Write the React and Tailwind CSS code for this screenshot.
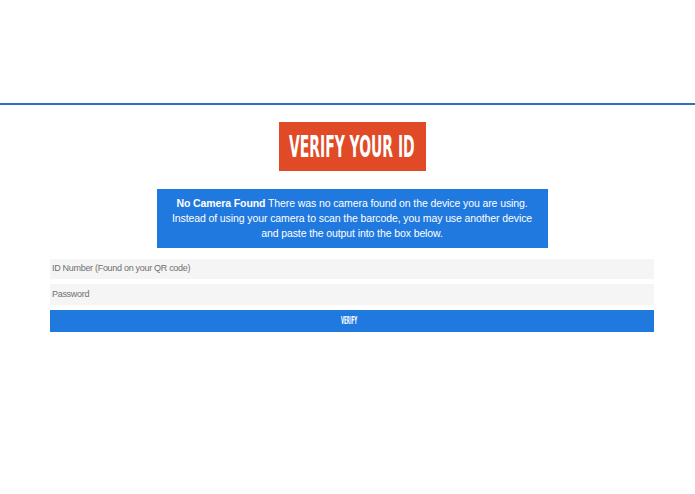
export default function App() {
  return (
    <div className="w-[695px] h-[494px] bg-white" style={{ fontFamily: '"Liberation Sans", Arial, sans-serif' }}>
      <div className="h-[103px]" />
      <div className="h-[2px] bg-[#2d6fc0]" />
      <div className="ml-[50px] w-[604px] flex flex-col items-center">
        <div className="mt-[17px] w-[147px] h-[49px] bg-[#e04a27] flex items-center justify-center overflow-hidden">
          <span
            className="inline-block whitespace-nowrap text-white font-bold text-[31px] leading-none scale-x-[0.5]"
            style={{ fontFamily: '"DejaVu Sans Condensed", "DejaVu Sans", sans-serif' }}
          >
            VERIFY YOUR ID
          </span>
        </div>
        <div className="mt-[18px] w-[391px] h-[59px] bg-[#1f79df] text-white text-center text-[10.5px] leading-[15px] tracking-[-0.1px] flex flex-col items-center justify-center whitespace-nowrap">
          <div><span className="font-bold">No Camera Found</span> There was no camera found on the device you are using.</div>
          <div>Instead of using your camera to scan the barcode, you may use another device</div>
          <div>and paste the output into the box below.</div>
        </div>
        <div className="mt-[11px] w-full h-[20px] bg-[#f5f5f5] flex items-center pl-[2px] text-[9px] tracking-[-0.3px] text-[#6f6f6f]">
          ID Number (Found on your QR code)
        </div>
        <div className="mt-[5px] w-full h-[21px] bg-[#f5f5f5] flex items-center pl-[2px] text-[9px] tracking-[-0.3px] text-[#6f6f6f]">
          Password
        </div>
        <div className="mt-[5px] w-full h-[22px] bg-[#1f79df] flex items-center justify-center">
          <span
            className="inline-block whitespace-nowrap text-white font-bold text-[10px] leading-none scale-x-[0.45] -translate-x-[3px]"
            style={{ fontFamily: '"DejaVu Sans Condensed", "DejaVu Sans", sans-serif' }}
          >
            VERIFY
          </span>
        </div>
      </div>
    </div>
  );
}
